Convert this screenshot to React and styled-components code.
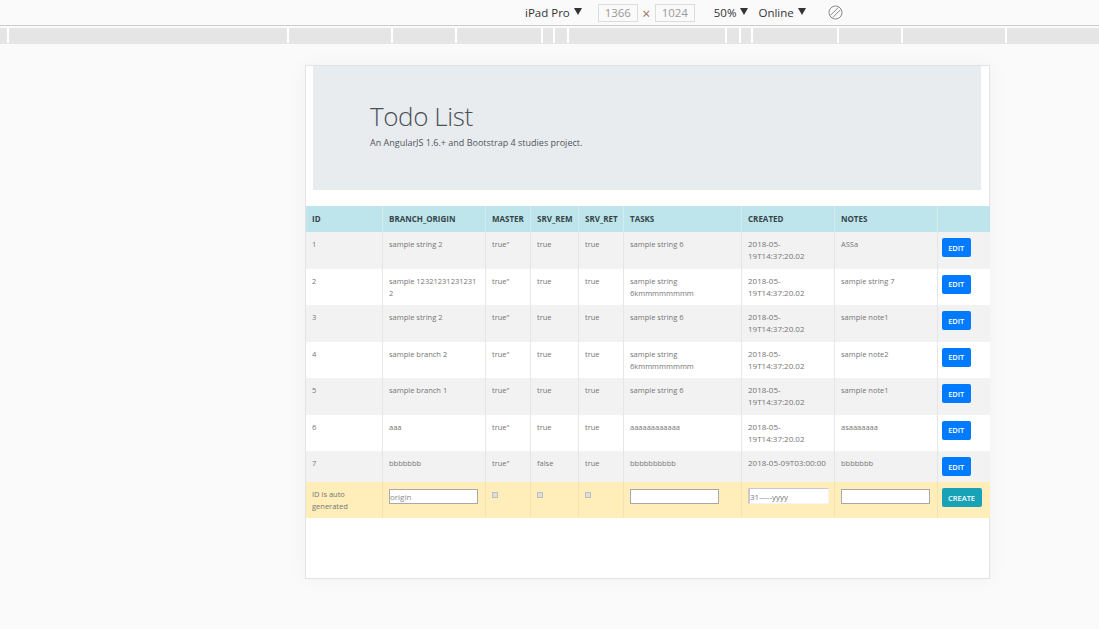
import React from "react";
import styled, { createGlobalStyle } from "styled-components";

const Global = createGlobalStyle`
    html, body {
        margin: 0;
        padding: 0;
        background: #fafafa;
        font-family: "Open Sans", "Liberation Sans", sans-serif;
    }
`;

const Screen = styled.div`
    width: 100%;
    height: 629px;
    overflow: hidden;
    background: #fafafa;
`;

const Toolbar = styled.div`
    height: 25px;
    box-sizing: border-box;
    padding-left: 525px;
    display: flex;
    align-items: center;
    font-size: 11.5px;
    color: #333;
`;

const Divider = styled.div`
    height: 1px;
    background: #cccccc;
`;

const Label = styled.span`
    margin-left: ${(p) => p.$left || 0}px;
`;

const Caret = styled.span`
    width: 0;
    height: 0;
    margin: -3px ${(p) => p.$after}px 0 ${(p) => p.$before}px;
    border-left: 4px solid transparent;
    border-right: 4px solid transparent;
    border-top: 7px solid #333;
`;

const SizeBox = styled.span`
    width: 40px;
    height: 18px;
    box-sizing: border-box;
    border: 1px solid #ddd;
    color: #999;
    text-align: center;
    line-height: 16px;
`;

const Times = styled.span`
    width: 17px;
    text-align: center;
    font-size: 14px;
    color: #94745c;
    padding-top: 2px;
`;

const Ruler = styled.div`
    height: 15px;
    margin-top: 2px;
    display: flex;
    gap: 2px;
    background: #fff;
    border-bottom: 1px solid #e5e5e5;
`;

const RulerPart = styled.div`
    width: ${(p) => p.$w}px;
    flex: none;
    background: #e5e5e5;
`;

const Panel = styled.div`
    width: 685px;
    height: 514px;
    box-sizing: border-box;
    margin: 21px 0 0 305px;
    background: #fff;
    border: 1px solid #e3e3e3;
    box-shadow: 0 0 20px rgba(0, 0, 0, 0.04);
`;

const Jumbotron = styled.div`
    height: 124px;
    box-sizing: border-box;
    margin: 0 8px 16px 7px;
    padding: 32px 0 0 57px;
    background: #e9ecef;
`;

const Title = styled.h1`
    margin: 0;
    font-size: 26px;
    font-weight: 300;
    line-height: 36px;
    letter-spacing: -0.4px;
    color: #4a5157;
`;

const Lead = styled.p`
    margin: 3px 0 0;
    font-size: 9px;
    line-height: 12px;
    color: #50565b;
`;

const Table = styled.table`
    width: 683px;
    table-layout: fixed;
    border-collapse: collapse;
    font-size: 7.5px;
    line-height: 12px;
    color: #757575;
`;

const HeadRow = styled.tr`
    height: 26px;
    background: #bee5eb;
`;

const Th = styled.th`
    padding: 0 6px;
    text-align: left;
    font-size: 8px;
    font-weight: 700;
    color: #36444a;
    border-left: 1px solid #d3ecf0;
    white-space: nowrap;
    &:first-child { border-left: none; }
`;

const Row = styled.tr`
    height: ${(p) => p.$h}px;
    background: ${(p) => (p.$odd ? "#f2f2f2" : "#fff")};
`;

const FormRow = styled.tr`
    height: 36px;
    background: #ffeeba;
`;

const Td = styled.td`
    padding: 6px 6px 0;
    vertical-align: top;
    border: 1px solid #e6e6e6;
    border-width: 0 0 0 1px;
    word-break: break-word;
    &:first-child { border-left: none; }
    tr:last-child > & { border-color: #f3e3b4; }
`;

const DateCell = styled(Td)`
    font-size: 8px;
`;

const ActionCell = styled(Td)`
    padding-left: 4px;
    padding-right: 0;
`;

const Button = styled.button`
    display: block;
    width: ${(p) => p.$w}px;
    height: 19px;
    padding: 0;
    border: none;
    border-radius: 2px;
    background: ${(p) => p.$bg};
    color: #fff;
    font-family: inherit;
    font-size: 7.5px;
    font-weight: 600;
`;

const TextField = styled.input`
    display: block;
    width: 89px;
    height: 15px;
    box-sizing: border-box;
    margin-top: 1px;
    padding: 0;
    border: 1px solid #a9a9a9;
    border-radius: 0;
    background: #fff;
    font-family: inherit;
    font-size: 8px;
    color: #777;
    outline: none;
    &::placeholder { color: #8a8a8a; }
`;

const DateField = styled(TextField)`
    width: 81px;
    height: 16px;
    margin-top: 0;
    padding-left: 0;
    border-width: 1px 1px 1px 2px;
    border-color: #c9c9c9 #f4f4f4 #f4f4f4 #c9c9c9;
`;

const Check = styled.input`
    display: block;
    appearance: none;
    width: 6px;
    height: 6px;
    margin: 4px 0 0;
    background: #dddddd;
    border: 1px solid #bdbdbd;
    box-sizing: border-box;
`;

const columns = [
    ["ID", 76.5],
    ["BRANCH_ORIGIN", 103],
    ["MASTER", 45],
    ["SRV_REM", 48],
    ["SRV_RET", 45],
    ["TASKS", 118],
    ["CREATED", 93],
    ["NOTES", 102.5],
    ["", 52.5],
];

const stamp = "2018-05-19T14:37:20.02";

const rows = [
    [1, "sample string 2", "true", "sample string 6", stamp, "ASSa"],
    [2, "sample 12321231231231 2", "true", "sample string 6kmmmmmmmm", stamp, "sample string 7"],
    [3, "sample string 2", "true", "sample string 6", stamp, "sample note1"],
    [4, "sample branch 2", "true", "sample string 6kmmmmmmmm", stamp, "sample note2"],
    [5, "sample branch 1", "true", "sample string 6", stamp, "sample note1"],
    [6, "aaa", "true", "aaaaaaaaaaaa", stamp, "asaaaaaaa"],
    [7, "bbbbbbb", "false", "bbbbbbbbbb", "2018-05-09T03:00:00", "bbbbbbb"],
];

const rulerParts = [7, 278, 102, 62, 84, 10, 12, 156, 12, 10, 84, 62, 102, 92];

function RotateIcon() {
    return (
        <svg width="15" height="15" viewBox="0 0 15 15" fill="none" stroke="#8a8a8a" strokeWidth="1">
            <circle cx="7.5" cy="7.5" r="6.5" />
            <path d="M2.6 10.2 L10.2 2.6 M4.8 12.4 L12.4 4.8" />
        </svg>
    );
}

export default function App() {
    return (
        <Screen>
            <Global />
            <Toolbar>
                <Label>iPad Pro</Label>
                <Caret $before={4} $after={16} />
                <SizeBox>1366</SizeBox>
                <Times>×</Times>
                <SizeBox>1024</SizeBox>
                <Label $left={19}>50%</Label>
                <Caret $before={4} $after={10} />
                <Label>Online</Label>
                <Caret $before={4} $after={22} />
                <RotateIcon />
            </Toolbar>
            <Divider />
            <Ruler>
                {rulerParts.map((w, i) => <RulerPart key={i} $w={w} />)}
            </Ruler>
            <Panel>
                <Jumbotron>
                    <Title>Todo List</Title>
                    <Lead>An AngularJS 1.6.+ and Bootstrap 4 studies project.</Lead>
                </Jumbotron>
                <Table>
                    <colgroup>
                        {columns.map(([name, w], i) => <col key={i} width={w} />)}
                    </colgroup>
                    <thead>
                        <HeadRow>
                            {columns.map(([name], i) => <Th key={i}>{name}</Th>)}
                        </HeadRow>
                    </thead>
                    <tbody>
                        {rows.map((r, i) => (
                            <Row key={r[0]} $odd={i % 2 === 0} $h={i === 6 ? 31 : 36.5}>
                                <Td>{r[0]}</Td>
                                <Td>{r[1]}</Td>
                                <Td>true"</Td>
                                <Td>{r[2]}</Td>
                                <Td>true</Td>
                                <Td>{r[3]}</Td>
                                <DateCell>{r[4]}</DateCell>
                                <Td>{r[5]}</Td>
                                <ActionCell><Button $w={29.5} $bg="#007bff">EDIT</Button></ActionCell>
                            </Row>
                        ))}
                        <FormRow>
                            <Td>ID is auto generated</Td>
                            <Td><TextField placeholder="origin" /></Td>
                            <Td><Check type="checkbox" /></Td>
                            <Td><Check type="checkbox" /></Td>
                            <Td><Check type="checkbox" /></Td>
                            <Td><TextField /></Td>
                            <Td><DateField defaultValue="31-----yyyy" /></Td>
                            <Td><TextField /></Td>
                            <ActionCell><Button $w={40} $bg="#17a2b8">CREATE</Button></ActionCell>
                        </FormRow>
                    </tbody>
                </Table>
            </Panel>
        </Screen>
    );
}
